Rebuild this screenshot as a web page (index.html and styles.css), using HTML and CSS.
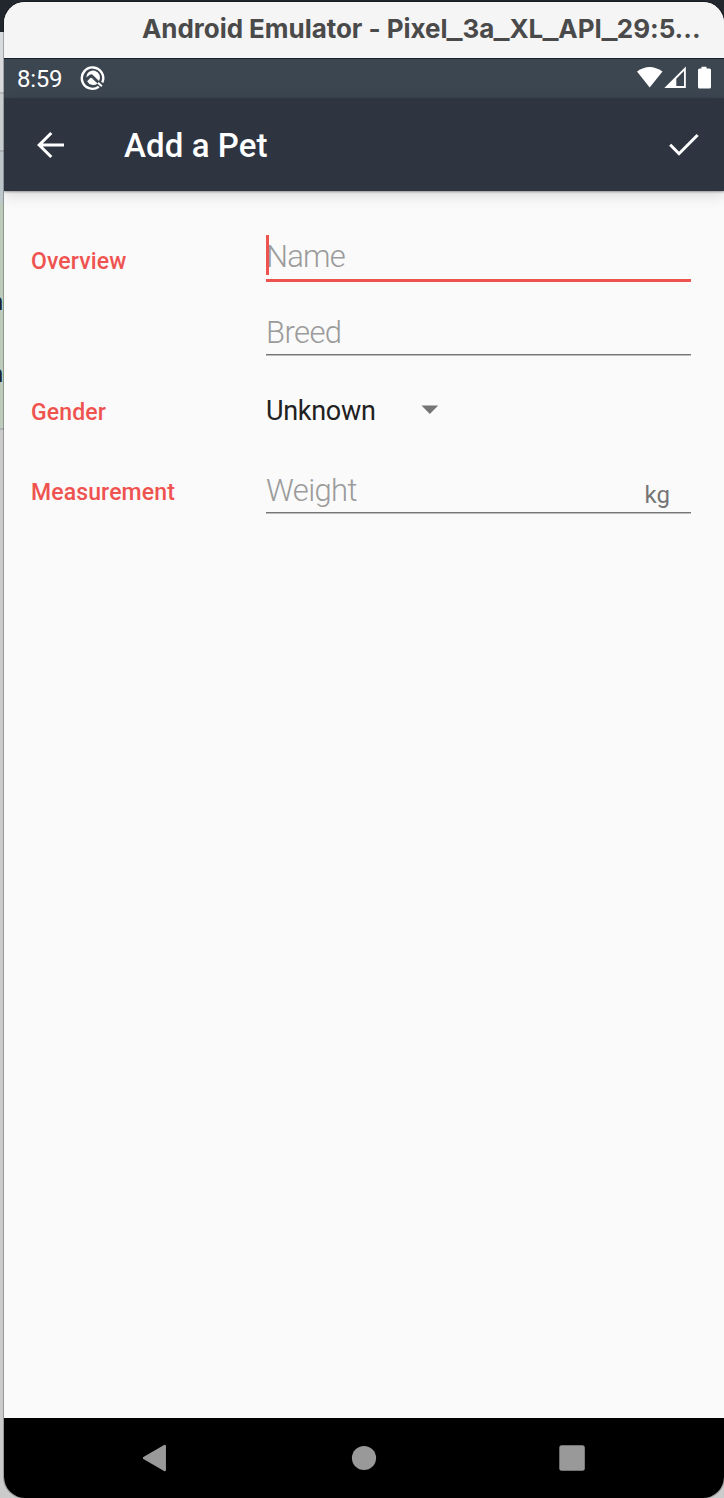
FILE: index.html
```html
<!DOCTYPE html>
<html lang="en">
<head>
<meta charset="utf-8">
<title>Add a Pet</title>
<link rel="stylesheet" href="styles.css">
</head>
<body>
<div class="desktop">
  <div class="behind"><span class="peek peek-one">n</span><span class="peek peek-two">n</span></div>
  <div class="window">
    <div class="titlebar"><span class="t title">Android Emulator - Pixel<span class="us">_</span>3a<span class="us">_</span>XL<span class="us">_</span>API<span class="us">_</span>29:5...</span></div>
    <div class="statusbar">
      <span class="clock">8:59</span>
      <svg class="q-icon" width="26" height="26" viewBox="0 0 26 26">
        <path d="M18.800 21.800A10.700 10.700 0 1 1 22.300 17.500" fill="none" stroke="#fff" stroke-width="2.400"/>
        <path d="M6.200 12.600A6.900 6.900 0 1 1 19 15.900L12.300 9.600Q11 8.600 9.800 9.800Z" fill="#fff"/>
        <path d="M7.100 16.300L10.200 13.200Q11 12.500 11.900 13.300L17.600 18.500A7 7 0 0 1 7.100 16.300Z" fill="#fff"/>
        <path d="M18 17.800L21.800 21.200" stroke="#fff" stroke-width="2.200"/>
      </svg>
      <svg class="signals" width="76" height="24" viewBox="0 0 76 24">
        <path d="M1 5.6Q13.500-3.400 26.500 5.600L13.700 21.500Z" fill="#fff"/>
        <path d="M28.300 22L49.800 .5V22Z" fill="#fff"/>
        <path d="M40.300 12.700L48 5V20H40.300Z" fill="#3c4651"/>
        <path d="M65.500 .8h5v1.700h3q1.500 0 1.500 1.500v17q0 1.500-1.500 1.500h-10q-1.500 0-1.500-1.500V4q0-1.500 1.500-1.500h2z" fill="#fff"/>
      </svg>
    </div>
    <div class="appbar">
      <svg class="back" width="28" height="28" viewBox="0 0 28 28"><path d="M27 14H2.500M14.300 2L2.200 14L14.300 26" fill="none" stroke="#fff" stroke-width="3"/></svg>
      <h1 class="heading">Add a Pet</h1>
      <svg class="check" width="30" height="24" viewBox="0 0 30 24"><path d="M1.200 11.800L10 20.700L28.600 2" fill="none" stroke="#fff" stroke-width="3"/></svg>
    </div>
    <div class="form">
      <div class="row row-name"><span class="label">Overview</span>
        <div class="field focused"><span class="cursor"></span><span class="t name">Name</span></div></div>
      <div class="row row-breed"><span></span>
        <div class="field"><span class="t breed">Breed</span></div></div>
      <div class="row row-gender"><span class="label">Gender</span>
        <div class="select"><span class="t unknown">Unknown</span><svg class="caret" width="18" height="10" viewBox="0 0 18 10"><path d="M.5 .5H17.200L8.800 9Z" fill="#757575"/></svg></div></div>
      <div class="row row-weight"><span class="label">Measurement</span>
        <div class="field"><span class="t weight">Weight</span><span class="unit">kg</span></div></div>
    </div>
    <div class="navbar">
      <svg width="26" height="30" viewBox="0 0 26 30"><path d="M1 15L21.700 3V27Z" fill="#999" stroke="#999" stroke-width="2.500" stroke-linejoin="round"/></svg>
      <svg width="26" height="26" viewBox="0 0 26 26"><circle cx="13" cy="13" r="12.100" fill="#999"/></svg>
      <svg width="26" height="26" viewBox="0 0 26 26"><rect x=".3" y=".3" width="25.500" height="25.500" rx="2.500" fill="#999"/></svg>
    </div>
  </div>
</div>
</body>
</html>
```
FILE: styles.css
```css
* { box-sizing: border-box; }
body { margin: 0; font-family: Roboto, "Liberation Sans", sans-serif; }
.desktop {
  position: relative;
  display: flex;
  height: 1498px;
  padding: 2px 0 0 4px;
  overflow: hidden;
  background: linear-gradient(#22262d 0 32px, #d8dadb 32px 92px, #b5babd 92px 94px, #c8cdd0 94px 150px, #abb2b5 150px 152px, #bdc6ca 152px 200px, #bccbbb 206px 428px, #b0b0b0 428px 430px, #cbcbcb 430px);
}
.behind { position: absolute; left: 0; top: 0; width: 3px; height: 500px; overflow: hidden; }
.peek { position: absolute; right: 0; font: 500 24px/28px Roboto, sans-serif; color: #1d2328; }
.peek-one { top: 288px; }
.peek-two { top: 360px; }
.window {
  position: relative;
  display: flex;
  flex-direction: column;
  flex: 1;
  border-radius: 21px;
  overflow: hidden;
  background: #fafafa;
  box-shadow: 0 0 0 1px rgba(0, 0, 0, .25);
}
.t { white-space: nowrap; }
.titlebar {
  height: 57px;
  padding-left: 138px;
  background: #f5f5f5;
  border-bottom: 1px solid #14202c;
  font: 700 26px/54px Inter, sans-serif;
  letter-spacing: -.05px;
  color: #4a4a4a;
}
.us { display: inline-block; padding: 0 1.400px; transform: scaleX(1.300); }
.statusbar { display: flex; align-items: center; height: 39px; padding: 0 13px; background: #3c4651; }
.clock { width: 63px; font-size: 24px; line-height: 39px; padding-top: 1px; letter-spacing: -.3px; color: #fff; }
.q-icon { margin-top: -1px; }
.signals { margin-left: auto; margin-right: -1px; margin-top: -1px; }
.appbar { z-index: 1; display: flex; align-items: center; height: 93px; padding: 0 25px 0 33px; background: #2e3541; box-shadow: 0 1px 2px rgba(0, 0, 0, .35), 0 4px 14px rgba(0, 0, 0, .14); }
.heading { flex: 1; margin: 3px 0 0 59px; font-size: 33px; font-weight: 500; line-height: 40px; letter-spacing: .1px; color: #fff; }
.check { margin-top: 1px; }
.form { flex: 1; padding: 44px 33px 0 27px; }
.row { display: grid; grid-template-columns: 235px 425px; }
.row-name { height: 76px; }
.row-breed { height: 79px; }
.row-gender { height: 79px; }
.label { padding-top: 7px; font-size: 23px; font-weight: 500; line-height: 40px; letter-spacing: .13px; color: #ef5350; }
.row-gender .label { padding-top: 3px; }
.row-weight .label { padding-top: 4px; }
.field { position: relative; display: flex; justify-content: space-between; height: 44px; border-bottom: 1px solid #757575; box-shadow: 0 1px #bdbdbd; font-size: 31px; font-weight: 300; line-height: 43px; letter-spacing: -.600px; color: #9b9b9b; }
.focused { height: 47px; border-bottom: 3px solid #ef5350; box-shadow: none; letter-spacing: -.800px; }
.cursor { position: absolute; left: 0; top: 0; width: 3px; height: 40px; background: #ef5350; }
.unit { padding: 6px 21px 0 0; font-size: 24px; font-weight: 400; line-height: 40px; letter-spacing: 0; color: #757575; }
.select { display: flex; align-items: center; gap: 45px; height: 41px; font-size: 27px; letter-spacing: -.300px; color: #212121; }
.caret { margin-top: -2px; }
.navbar { display: grid; grid-template-columns: 26px 26px 26px; column-gap: 182px; align-items: center; justify-content: center; height: 80px; padding-right: 1px; background: #000; }
```
